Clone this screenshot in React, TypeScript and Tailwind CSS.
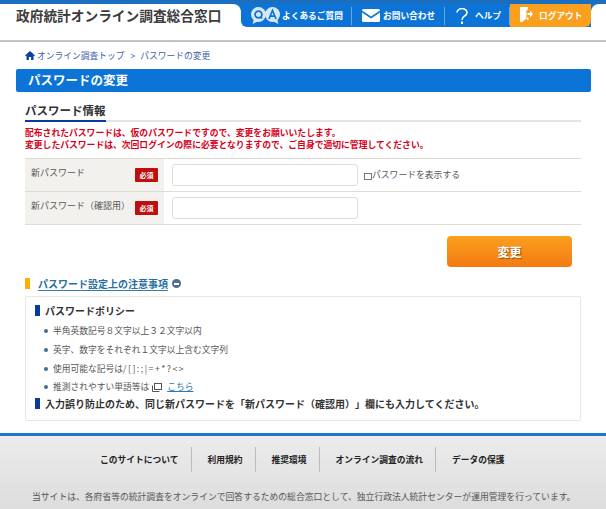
const FONT = "font-['Noto_Sans_CJK_JP','Noto_Sans_CJK_SC',sans-serif] [text-spacing-trim:space-all]";

const FOOTER_LINKS = ["このサイトについて", "利用規約", "推奨環境", "オンライン調査の流れ", "データの保護"];

function RequiredBadge() {
  return (
    <span className="flex h-[14px] w-[23px] items-center justify-center rounded-[1px] bg-[#c00d0d] text-[7px] font-bold leading-none text-white">
      必須
    </span>
  );
}

function FormRow({ label, children }: { label: string; children?: React.ReactNode }) {
  return (
    <div className="flex h-[33px] border-b border-[#dedbd0]">
      <div className="flex w-[139px] items-center justify-between bg-[#f2f1ee] px-[6px] text-[9px] text-[#555]">
        <span className="-mt-[4px]">{label}</span>
        <RequiredBadge />
      </div>
      <div className="flex items-center pl-[8px]">
        <div className="h-[22px] w-[186px] rounded-[3px] border border-[#dddddd] bg-white" />
        {children}
      </div>
    </div>
  );
}

function Bullet() {
  return <span className="h-[4px] w-[4px] shrink-0 rounded-full bg-[#3f6f96]" />;
}

export default function App() {
  return (
    <div className={`${FONT} h-[509px] w-[606px] overflow-hidden bg-white`}>
      {/* header */}
      <header className="h-[42px] border-b-2 border-[#c4c4c4]">
        <div className="h-[4px] bg-[#1a6fc0]" />
        <div className="flex h-[23px] items-start">
          <div className="h-[23px] w-[241px] bg-[#1a6fc0]">
            <div className="h-[23px] rounded-tr-[8px] bg-white pl-[16px]">
              <h1 className="text-[13.7px] font-bold leading-[22px] text-[#3c3c3c]">政府統計オンライン調査総合窓口</h1>
            </div>
          </div>
          <div className="h-[23px] w-[350px] bg-white">
            <nav className="flex h-[23px] items-center rounded-bl-[6px] bg-[#0c74d6] text-[8.7px] font-bold text-white">
              <div className="flex w-[110px] items-center gap-[2px] pl-[10px]">
                <svg width="29" height="17" viewBox="0 0 29 17" className="shrink-0">
                  <circle cx="7.5" cy="7.5" r="7.5" fill="#d7e9f9" />
                  <circle cx="21.5" cy="7.5" r="7.5" fill="#d7e9f9" />
                  <path d="M3 12l-1.5 5 5-2.5zM26 12l1.5 5-5-2.5z" fill="#d7e9f9" />
                  <circle cx="7.5" cy="7.5" r="3.4" fill="none" stroke="#0c74d6" strokeWidth="1.8" />
                  <path d="M9 9.5l2.2 2" stroke="#0c74d6" strokeWidth="1.5" />
                  <path d="M18 12l3.5-8.5 3.5 8.5M19.4 9.2h4.2" fill="none" stroke="#0c74d6" strokeWidth="1.7" />
                </svg>
                <span className="whitespace-nowrap">よくあるご質問</span>
              </div>
              <div className="h-[18px] w-px bg-[#6aa9e4]" />
              <div className="flex w-[92px] items-center gap-[3px] pl-[10px]">
                <svg width="18" height="13" viewBox="0 0 18 13" className="shrink-0">
                  <path d="M0 1.5A1.5 1.5 0 0 1 1.5 0H16.5A1.5 1.5 0 0 1 18 1.5L9 7.5z" fill="#fff" />
                  <path d="M0 3.5L9 9.5 18 3.5V11.5A1.5 1.5 0 0 1 16.5 13H1.5A1.5 1.5 0 0 1 0 11.5z" fill="#fff" />
                </svg>
                <span className="whitespace-nowrap">お問い合わせ</span>
              </div>
              <div className="h-[18px] w-px bg-[#6aa9e4]" />
              <div className="flex w-[64px] items-center gap-[7px] pl-[11px]">
                <svg width="12" height="16" viewBox="0 0 12 16" className="shrink-0">
                  <path d="M1 4.5a5 4 0 1 1 8 3.2C7 9 6 9.5 6 12" fill="none" stroke="#fff" strokeWidth="1.6" />
                  <rect x="5" y="13.5" width="2" height="2.5" fill="#fff" />
                </svg>
                <span className="whitespace-nowrap">ヘルプ</span>
              </div>
              <div className="h-[18px] w-px bg-[#6aa9e4]" />
              <div className="flex h-[23px] flex-1 items-center gap-[6px] rounded-br-[6px] bg-[#fa9f1e] pl-[10px]">
                <svg width="13" height="15" viewBox="0 0 13 15" className="-mt-[2px] shrink-0">
                  <path d="M0 0h8v3H6.5v8.5L2 15H0z" fill="#fff" />
                  <path d="M7.5 6h2.5V3.5l3 3.5-3 3.5V8H7.5z" fill="#fff" />
                  <rect x="7" y="10.5" width="1.5" height="2.5" fill="#fff" />
                </svg>
                <span className="whitespace-nowrap">ログアウト</span>
              </div>
            </nav>
          </div>
          <div className="h-[23px] flex-1 bg-[#1a6fc0]">
            <div className="h-[23px] rounded-tl-[8px] bg-white" />
          </div>
        </div>
      </header>

      {/* breadcrumb */}
      <div className="flex h-[27px] items-center pl-[25px] text-[8.75px] text-[#3d5fa8]">
        <svg width="10" height="9" viewBox="0 0 10 9" className="mr-[2px] shrink-0">
          <path d="M5 0L0 4.5l.6.7L1.5 4.4V9h2.4V6h2.2v3h2.4V4.4l.9.8.6-.7z" fill="#0b3fa6" />
        </svg>
        <span>オンライン調査トップ</span>
        <span className="ml-[6px]">&gt;</span>
        <span className="ml-[5px]">パスワードの変更</span>
      </div>

      <main className="pl-[16px] pr-[15px]">
        <h2 className="flex h-[23px] items-center rounded-[2px] bg-[#0c74d6] pl-[12px] text-[12.5px] font-bold text-white">
          パスワードの変更
        </h2>

        <div className="pl-[9px] pr-[10px]">
          <div className="mt-[4px] border-b-[2px] border-[#e5e3dc]">
            <h3 className="-mb-[2px] inline-block border-b-[2px] border-[#0b3a9e] pb-[1px] text-[11.5px] font-bold leading-[18px] text-[#333]">
              パスワード情報
            </h3>
          </div>

          <div className="mt-[5px] text-[8.8px] font-bold leading-[12px] text-[#d9001b]">
            <p>配布されたパスワードは、仮のパスワードですので、変更をお願いいたします。</p>
            <p>変更したパスワードは、次回ログインの際に必要となりますので、ご自身で適切に管理してください。</p>
          </div>

          <div className="mt-[7px] border-t border-[#dedbd0]">
            <FormRow label="新パスワード">
              <label className="-mt-[1px] ml-[6px] flex items-center text-[8.8px] text-[#555]">
                <span className="mt-[3px] h-[7px] w-[8px] border border-[#777]" />
                パスワードを表示する
              </label>
            </FormRow>
            <FormRow label="新パスワード（確認用）" />
          </div>

          <div className="mt-[11px] flex justify-end pr-[9px]">
            <button className="h-[31px] w-[125px] rounded-[4px] bg-gradient-to-b from-[#fa9f1e] to-[#f37a12] text-[12px] font-bold text-white [text-shadow:1px_1px_1px_rgba(0,0,0,0.4)]">
              変更
            </button>
          </div>

          <div className="mt-[10px] flex h-[13px] items-center">
            <span className="h-[11px] w-[5px] bg-[#fcae06]" />
            <span className="ml-[8px] border-b border-[#2d7fb8] text-[10px] font-bold leading-[13px] text-[#2a6f9e]">
              パスワード設定上の注意事項
            </span>
            <span className="ml-[4px] flex h-[9px] w-[9px] items-center justify-center rounded-full bg-[#4f6f8f]">
              <span className="h-[2px] w-[5px] bg-white" />
            </span>
          </div>

          <section className="mt-[6px] h-[125px] rounded-[2px] border border-[#e8e6df] pl-[9px] pt-[6px]">
            <h4 className="flex h-[14px] items-center text-[10px] font-bold text-[#333]">
              <span className="mr-[5px] h-[11px] w-[5px] bg-[#0b3a9e]" />
              パスワードポリシー
            </h4>
            <ul className="mt-[4px] pl-[9px] text-[8.75px] text-[#555]">
              {["半角英数記号８文字以上３２文字以内", "英字、数字をそれぞれ１文字以上含む文字列"].map((t) => (
                <li key={t} className="flex h-[19px] items-center gap-[5px]">
                  <Bullet />
                  {t}
                </li>
              ))}
              <li className="flex h-[19px] items-center gap-[5px]">
                <Bullet />
                <span>
                  使用可能な記号は<span className="tracking-[1.5px]">/[]:;|=+*?&lt;&gt;</span>
                </span>
              </li>
              <li className="flex h-[18px] items-center gap-[5px]">
                <Bullet />
                推測されやすい単語等は
                <svg width="10" height="9" viewBox="0 0 10 9" className="-ml-[2px] -mr-[1px]">
                  <rect x="2.5" y="0.5" width="7" height="6" fill="none" stroke="#555" />
                  <path d="M0.5 2.5v6h7" fill="none" stroke="#555" />
                </svg>
                <span className="ml-[1px] text-[#2a7ab0] underline">こちら</span>
              </li>
            </ul>
            <p className="flex h-[14px] items-center text-[10px] font-bold text-[#333]">
              <span className="mr-[5px] h-[11px] w-[5px] bg-[#0b3a9e]" />
              入力誤り防止のため、同じ新パスワードを「新パスワード（確認用）」欄にも入力してください。
            </p>
          </section>
        </div>
      </main>

      {/* footer */}
      <footer className="mt-[12px] h-[80px] border-t-[3px] border-[#1a78cf] bg-gradient-to-b from-[#ececec] to-[#dcdcdc]">
        <ul className="flex h-[25px] translate-y-[11px] items-center pl-[100px] text-[8.75px] font-bold text-[#222]">
          {FOOTER_LINKS.map((label, i) => (
            <li
              key={label}
              className={
                i === 0
                  ? "flex h-[25px] items-center border-r border-[#bbb] pr-[12px]"
                  : i === FOOTER_LINKS.length - 1
                    ? "flex h-[25px] items-center pl-[16px]"
                    : "flex h-[25px] items-center border-r border-[#bbb] pl-[16px] pr-[12px]"
              }
            >
              {label}
            </li>
          ))}
        </ul>
        <p className="mt-[29px] pl-[32px] text-[8.8px] text-[#555]">
          当サイトは、各府省等の統計調査をオンラインで回答するための総合窓口として、独立行政法人統計センターが運用管理を行っています。
        </p>
      </footer>
    </div>
  );
}
